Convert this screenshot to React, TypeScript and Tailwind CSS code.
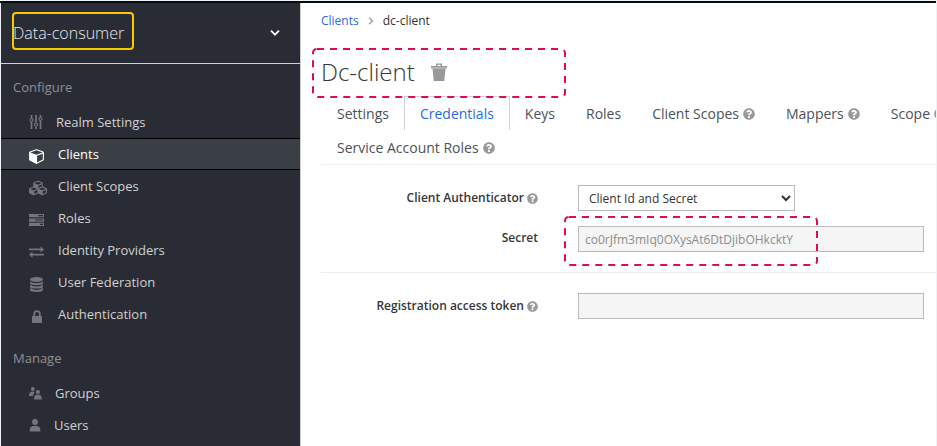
import type { ReactNode } from 'react';
import { FaQuestionCircle } from 'react-icons/fa';

type NavItem = { label: string; icon: ReactNode; box: string; active?: boolean };

const SlidersIcon = () => (
  <svg viewBox="0 0 14 14" className="h-3.5 w-3.5" fill="none" stroke="currentColor">
    <path d="M2.500 0v3M2.500 7v7M7 0v7.500M7 11.500v2.500M11.500 0v2M11.500 6v8" strokeWidth="1.700" />
    <circle cx="2.500" cy="5" r="1.500" strokeWidth="1.200" />
    <circle cx="7" cy="9.500" r="1.500" strokeWidth="1.200" />
    <circle cx="11.500" cy="4" r="1.500" strokeWidth="1.200" />
  </svg>
);

const CubeIcon = () => (
  <svg viewBox="0 0 1664 1792" className="h-4 w-[15px]" fill="currentColor">
    <path d="M896 1629l640-349v-636l-640 233v752zm-64-865l698-254-698-254-698 254 698 254zm832-252v768q0 35-18 65t-49 47l-704 384q-28 16-61 16t-61-16l-704-384q-31-17-49-47t-18-65v-768q0-40 23-73t61-47l704-256q22-8 44-8t44 8l704 256q38 14 61 47t23 73z" />
  </svg>
);

const CubesIcon = () => (
  <svg viewBox="0 0 2176 1792" className="h-4 w-[18px]" fill="currentColor">
    <path d="M640 1632l384-192v-314l-384 164v342zm-64-454l404-173-404-173-404 173 404 173zm1088 454l384-192v-314l-384 164v342zm-64-454l404-173-404-173-404 173 404 173zm-448-293l384-165v-266l-384 164v267zm-64-379l441-189-441-189-441 189 441 189zm1088 518v416q0 36-19 67t-52 47l-448 224q-25 14-57 14t-57-14l-448-224q-4-2-7-4-2 2-7 4l-448 224q-25 14-57 14t-57-14l-448-224q-33-16-52-47t-19-67v-416q0-38 21-70t57-48l434-186v-400q0-38 21-70t57-48l448-192q23-10 50-10t50 10l448 192q35 16 57 48t21 70v400l434 186q36 16 57 48t21 70z" />
  </svg>
);

const TasksIcon = () => (
  <svg viewBox="0 0 15 12" className="h-3 w-[15px]" fill="currentColor" fillRule="evenodd">
    <path d="M0 0h15v3.300H0zM9 1.100v1.100h5V1.100zM0 4.400h15v3.300H0zM6 5.500v1.100h8V5.500zM0 8.700h15V12H0zM11 9.800v1.100h3V9.800z" />
  </svg>
);

const ExchangeIcon = () => (
  <svg viewBox="0 0 15 12" className="h-3 w-[15px]" fill="currentColor">
    <path d="M0 2.500h11.500V.300L15 3.400l-3.500 3.100V4.300H0zM15 9.500H3.500v2.200L0 8.600l3.500-3.100v2.200H15z" />
  </svg>
);

const DatabaseIcon = () => (
  <svg viewBox="0 0 15 15" className="h-[15px] w-[15px]" fill="currentColor">
    <ellipse cx="7.500" cy="2.500" rx="6.500" ry="2.500" />
    <path d="M1 4.500q2 1.800 6.500 1.800T14 4.500v1.600q0 2.200-6.500 2.200T1 6.100zM1 7.800q2 1.800 6.500 1.800T14 7.800v1.600q0 2.200-6.500 2.200T1 9.400zM1 11.100q2 1.800 6.500 1.800t6.500-1.800v1.600q0 2.200-6.500 2.200T1 12.700z" />
  </svg>
);

const LockIcon = () => (
  <svg viewBox="0 0 15 13" className="h-[13px] w-[15px]" fill="currentColor">
    <rect x="3" y="6" width="10" height="7" rx="0.700" />
    <path d="M5.200 6.500V4a2.800 2.800 0 0 1 5.600 0v2.500" fill="none" stroke="currentColor" strokeWidth="1.800" />
  </svg>
);

const GroupsIcon = () => (
  <svg viewBox="0 0 13 13" className="h-[13px] w-[13px]" fill="currentColor">
    <circle cx="3.800" cy="2" r="1.900" />
    <path d="M0 9q0-4.500 3.500-4.500 1.500 0 2.200 1Q4.300 6.800 4 9z" />
    <circle cx="8.900" cy="5" r="2.100" />
    <path d="M4.900 12.500q0-5 4-5t4 5z" />
  </svg>
);

const UserIcon = () => (
  <svg viewBox="0 0 12 13" className="h-[13px] w-3" fill="currentColor">
    <circle cx="6" cy="3" r="2.900" />
    <path d="M.700 12.500V11q0-4.200 5.300-4.200T11.300 11v1.500z" />
  </svg>
);

const TrashIcon = () => (
  <svg viewBox="0 0 16 18" className="h-[18px] w-4" fill="#999">
    <path d="M5 3V.500h6V3h5v2.500H0V3zM6.500 3h3V1.700h-3z" fillRule="evenodd" />
    <path d="M1.500 5.500h13L13.300 18H2.700z" />
    <path d="M0 4.200h16v1.300H0z" fill="#bbb" />
  </svg>
);

const Chevron = ({ className }: { className: string }) => (
  <svg viewBox="0 0 10 6" className={className} fill="none" stroke="currentColor">
    <path d="M1 .700l4 4 4-4" strokeWidth="1.700" />
  </svg>
);

const configure: NavItem[] = [
  { label: 'Realm Settings', icon: <SlidersIcon />, box: 'w-4' },
  { label: 'Clients', icon: <CubeIcon />, box: 'w-[18px] pt-1', active: true },
  { label: 'Client Scopes', icon: <CubesIcon />, box: 'w-[18px] pt-1' },
  { label: 'Roles', icon: <TasksIcon />, box: 'w-[18px] pt-1' },
  { label: 'Identity Providers', icon: <ExchangeIcon />, box: 'w-[18px] pt-1' },
  { label: 'User Federation', icon: <DatabaseIcon />, box: 'w-[18px] pt-1' },
  { label: 'Authentication', icon: <LockIcon />, box: 'w-[18px] pt-1' },
];

const manage: NavItem[] = [
  { label: 'Groups', icon: <GroupsIcon />, box: 'w-[15px]' },
  { label: 'Users', icon: <UserIcon />, box: 'w-3.5' },
];

const tabs = [
  { label: 'Settings' },
  { label: 'Credentials', active: true },
  { label: 'Keys' },
  { label: 'Roles' },
  { label: 'Client Scopes', help: true },
  { label: 'Mappers', help: true },
  { label: 'Scope', help: true },
];

const Help = ({ className }: { className: string }) => (
  <FaQuestionCircle className={`shrink-0 text-[#999] ${className}`} />
);

function NavSection({ title, items }: { title: string; items: NavItem[] }) {
  return (
    <section className="mb-[5px]">
      <h2 className="flex h-[42px] items-center pl-3 pt-1.5 text-[13px] text-[#8f9092]">{title}</h2>
      <ul>
        {items.map((item) => (
          <li key={item.label}>
            <a
              href="#"
              className={`flex h-8 items-center gap-[11px] border-y pl-7 text-[13px] ${
                item.active ? 'border-black bg-[#393f44] text-white' : 'border-transparent text-[#d1d1d1]'
              }`}
            >
              <span className={`flex shrink-0 ${item.box} ${item.active ? 'text-white' : 'text-[#72767b]'}`}>
                {item.icon}
              </span>
              <span className="pt-0.5">{item.label}</span>
            </a>
          </li>
        ))}
      </ul>
    </section>
  );
}

/* Dashed marker drawn around an area of the page. */
const Highlight = ({ className }: { className: string }) => (
  <svg className={`pointer-events-none absolute overflow-visible ${className}`} fill="none">
    <rect width="100%" height="100%" rx="4" stroke="#db0d5b" strokeWidth="2" strokeDasharray="7 6" />
  </svg>
);

const fieldClass = 'block h-[26px] w-full border border-[#bbb] bg-[#f5f5f5] px-1.5 text-xs text-[#8b8d8f]';

export default function App() {
  return (
    <div className="flex h-screen flex-col overflow-hidden bg-[#edf3f6] pr-px pt-px font-['Open_Sans','Noto_Sans',sans-serif]">
      <div className="h-0.5 shrink-0 bg-[#030d10]" />
      <div className="flex min-h-0 flex-1 pl-px">
        <nav className="w-[300px] shrink-0 border-r border-[#d1d1d1] bg-[#292c34]">
          <button className="relative flex h-[61px] w-full items-center justify-between border-b border-[#d1d1d1] pl-3 pr-5 text-left text-base font-light text-[#e8e8e8]">
            Data-consumer
            <Chevron className="h-1.5 w-2.5 text-white" />
            <span className="absolute left-[11px] top-[9px] h-[38px] w-[122px] rounded-sm border-2 border-[#f8c800]" />
          </button>
          <NavSection title="Configure" items={configure} />
          <NavSection title="Manage" items={manage} />
        </nav>

        <main className="min-w-0 flex-1 bg-white pl-5">
          <ol className="flex items-center pt-2 text-xs leading-5 text-[#333]">
            <li>
              <a href="#" className="text-[#2a6bdb]">Clients</a>
            </li>
            <li className="px-2">
              <Chevron className="h-1.5 w-2 -rotate-90 text-[#9c9c9c]" />
            </li>
            <li>dc-client</li>
          </ol>

          <div className="relative mb-2 mt-6 flex h-[33px] items-center gap-4">
            <h1 className="text-2xl font-light text-[#363636]">Dc-client</h1>
            <button aria-label="Delete client">
              <TrashIcon />
            </button>
            <Highlight className="-left-2 -top-1.5 h-12 w-[252px]" />
          </div>

          <div className="overflow-hidden border-b border-[#ededec] text-sm text-[#4d5258]">
            <ul className="flex">
              {tabs.map((tab) => (
                <li key={tab.label} className="-mr-px shrink-0">
                  <a
                    href="#"
                    className={`flex h-[34px] items-center gap-1 border-x border-t px-[15px] ${
                      tab.active ? 'border-[#d1d1d1] text-[#2a6bdb]' : 'border-transparent'
                    }`}
                  >
                    {tab.label}
                    {tab.help && <Help className="h-3 w-3" />}
                  </a>
                </li>
              ))}
            </ul>
            <a href="#" className="flex h-[34px] items-center gap-1 px-4 pt-0.5">
              Service Account Roles
              <Help className="h-3 w-3" />
            </a>
          </div>

          <form className="grid grid-cols-[217px_1fr] items-center gap-x-10 pt-5 text-xs font-semibold text-[#363636]">
            <label htmlFor="authenticator" className="flex items-center justify-end gap-[3px]">
              Client Authenticator
              <Help className="h-[11px] w-[11px]" />
            </label>
            <select
              id="authenticator"
              className="h-[26px] w-[217px] border border-[#bbb] bg-white px-1.5 text-xs font-normal text-[#333]"
            >
              <option>Client Id and Secret</option>
            </select>

            <label htmlFor="secret" className="mt-3 text-right">Secret</label>
            <div className="relative mr-3 mt-[15px] font-normal">
              <input id="secret" readOnly defaultValue="co0rJfm3mIq0OXysAt6DtDjibOHkcktY" className={fieldClass} />
              <Highlight className="-left-[13px] -top-[9px] h-12 w-[252px]" />
            </div>

            <hr className="col-span-2 my-5 border-[#ededec]" />

            <label htmlFor="token" className="flex items-center justify-end gap-[3px]">
              Registration access token
              <Help className="h-[11px] w-[11px]" />
            </label>
            <div className="mr-3 font-normal">
              <input id="token" readOnly className={fieldClass} />
            </div>
          </form>
        </main>
      </div>
    </div>
  );
}
